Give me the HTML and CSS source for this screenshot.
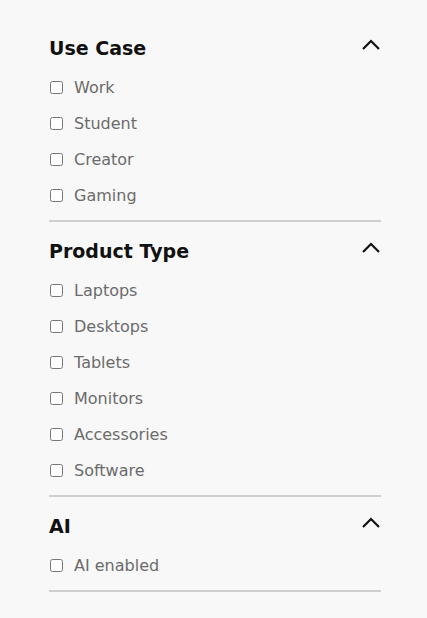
FILE: index.html
```html
<!DOCTYPE html>
<html>

<head>
    <title>Filters</title>
    <link rel="stylesheet" href="styles.css">
</head>

<body>
    <div class="filters">
        <div class="filter-group">
            <div class="filter-head">
                <span class="filter-title">Use Case</span>
                <svg class="chevron" width="20" height="12" viewBox="0 0 20 12"><polyline points="2,10 10,2 18,10" /></svg>
            </div>
            <ul class="filter-list">
                <li><label><input type="checkbox"><span>Work</span></label></li>
                <li><label><input type="checkbox"><span>Student</span></label></li>
                <li><label><input type="checkbox"><span>Creator</span></label></li>
                <li><label><input type="checkbox"><span>Gaming</span></label></li>
            </ul>
        </div>
        <div class="filter-group">
            <div class="filter-head">
                <span class="filter-title">Product Type</span>
                <svg class="chevron" width="20" height="12" viewBox="0 0 20 12"><polyline points="2,10 10,2 18,10" /></svg>
            </div>
            <ul class="filter-list">
                <li><label><input type="checkbox"><span>Laptops</span></label></li>
                <li><label><input type="checkbox"><span>Desktops</span></label></li>
                <li><label><input type="checkbox"><span>Tablets</span></label></li>
                <li><label><input type="checkbox"><span>Monitors</span></label></li>
                <li><label><input type="checkbox"><span>Accessories</span></label></li>
                <li><label><input type="checkbox"><span>Software</span></label></li>
            </ul>
        </div>
        <div class="filter-group">
            <div class="filter-head">
                <span class="filter-title">AI</span>
                <svg class="chevron" width="20" height="12" viewBox="0 0 20 12"><polyline points="2,10 10,2 18,10" /></svg>
            </div>
            <ul class="filter-list">
                <li><label><input type="checkbox"><span>AI enabled</span></label></li>
            </ul>
        </div>
    </div>
</body>

</html>
```

FILE: styles.css
```css
body{
    margin: 0;
    background-color: #f8f8f8;
    font-family: "DejaVu Sans", "Noto Sans", sans-serif;
}
.filters{
    padding: 19px 46px 0 49px;
}
.filter-group{
    padding: 17px 0 7px;
    border-bottom: 2px solid #cfcfcf;
}
.filter-head{
    height: 24px;
    margin-bottom: 9px;
    display: flex;
    align-items: center;
    justify-content: space-between;
}
.filter-title{
    font-size: 19px;
    font-weight: bold;
    color: #111;
}
.chevron{
    margin-top: -6px;
}
.chevron polyline{
    fill: none;
    stroke: #111;
    stroke-width: 2.2;
}
.filter-list{
    list-style: none;
    margin: 0;
    padding: 0;
}
.filter-list li{
    height: 36px;
    display: flex;
    align-items: center;
}
.filter-list label{
    display: flex;
    align-items: center;
    cursor: pointer;
}
.filter-list input[type=checkbox]{
    width: 13px;
    height: 13px;
    margin: 0 11px 0 1px;
}
.filter-list span{
    font-size: 16px;
    color: #6b6b6b;
}
```
